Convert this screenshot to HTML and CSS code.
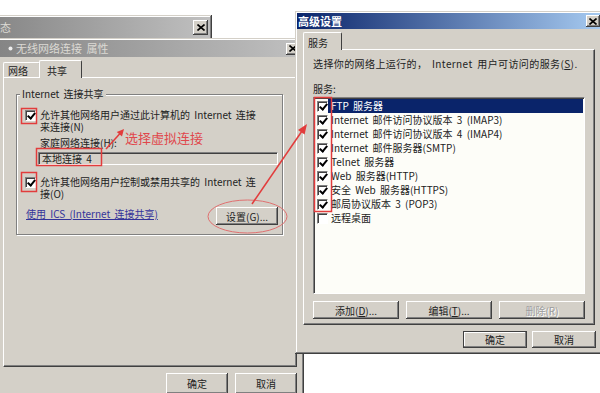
FILE: index.html
```html
<!DOCTYPE html>
<html lang="zh-CN">
<head>
  <meta charset="utf-8">
  <title>高级设置</title>
  <link rel="stylesheet" href="styles.css">
</head>
<body>
  <div class="desktop">

    <!-- window at the back, only its title bar is left in view -->
    <div class="win win-status">
      <div class="titlebar inactive status-bar">
        <span class="title-text">状态</span>
        <span class="close-btn big">
          <svg width="8" height="7" viewBox="0 0 8 7"><path d="M0.5 0.5 L7.5 6.5 M7.5 0.5 L0.5 6.5" stroke="#000" stroke-width="1.6"/></svg>
        </span>
      </div>
    </div>

    <!-- connection properties -->
    <div class="win win-props">
      <div class="titlebar inactive">
        <svg class="title-icon" width="5" height="5" viewBox="0 0 5 5"><circle cx="2.5" cy="2.5" r="2" fill="#eeeeee"/></svg>
        <span class="title-text">无线网络连接 属性</span>
        <span class="close-btn">
          <svg width="8" height="7" viewBox="0 0 8 7"><path d="M0.5 0.5 L7.5 6.5 M7.5 0.5 L0.5 6.5" stroke="#000" stroke-width="1.6"/></svg>
        </span>
      </div>

      <div class="tabs props-tabs">
        <div class="tab tab-net">网络</div>
        <div class="tab active tab-share">共享</div>
      </div>

      <div class="page props-page">
        <fieldset class="group">
          <legend>Internet 连接共享</legend>
          <div class="check-row">
            <span class="checkbox checked"></span>
            <span class="check-label">允许其他网络用户通过此计算机的 Internet 连接<br>来连接(N)</span>
          </div>
          <div class="field-label">家庭网络连接(H):</div>
          <div class="textbox">本地连接 4</div>
          <div class="check-row second">
            <span class="checkbox checked"></span>
            <span class="check-label">允许其他网络用户控制或禁用共享的 Internet 连<br>接(O)</span>
          </div>
          <div class="group-foot">
            <a class="link">使用 ICS (Internet 连接共享)</a>
            <button class="btn btn-settings">设置(G)...</button>
          </div>
        </fieldset>
      </div>

      <div class="dialog-buttons props-buttons">
        <button class="btn">确定</button>
        <button class="btn">取消</button>
      </div>
    </div>

    <!-- advanced settings, the active dialog -->
    <div class="win win-adv">
      <div class="titlebar active-bar">
        <span class="title-text">高级设置</span>
        <span class="close-btn">
          <svg width="8" height="7" viewBox="0 0 8 7"><path d="M0.5 0.5 L7.5 6.5 M7.5 0.5 L0.5 6.5" stroke="#000" stroke-width="1.6"/></svg>
        </span>
      </div>

      <div class="tabs adv-tabs">
        <div class="tab active tab-service">服务</div>
      </div>

      <div class="page adv-page">
        <p class="intro">选择你的网络上运行的， Internet 用户可访问的服务(<u>S</u>).</p>
        <p class="list-title">服务:</p>
        <div class="listbox">
          <div class="list-row selected"><span class="checkbox checked"></span><span class="row-text">FTP 服务器</span></div>
          <div class="list-row"><span class="checkbox checked"></span><span class="row-text">Internet 邮件访问协议版本 3 (IMAP3)</span></div>
          <div class="list-row"><span class="checkbox checked"></span><span class="row-text">Internet 邮件访问协议版本 4 (IMAP4)</span></div>
          <div class="list-row"><span class="checkbox checked"></span><span class="row-text">Internet 邮件服务器(SMTP)</span></div>
          <div class="list-row"><span class="checkbox checked"></span><span class="row-text">Telnet 服务器</span></div>
          <div class="list-row"><span class="checkbox checked"></span><span class="row-text">Web 服务器(HTTP)</span></div>
          <div class="list-row"><span class="checkbox checked"></span><span class="row-text">安全 Web 服务器(HTTPS)</span></div>
          <div class="list-row"><span class="checkbox checked"></span><span class="row-text">邮局协议版本 3 (POP3)</span></div>
          <div class="list-row"><span class="checkbox"></span><span class="row-text">远程桌面</span></div>
        </div>
        <div class="list-buttons">
          <button class="btn">添加(<u>D</u>)...</button>
          <button class="btn">编辑(<u>T</u>)...</button>
          <button class="btn disabled">删除(R)</button>
        </div>
      </div>

      <div class="dialog-buttons adv-buttons">
        <button class="btn default">确定</button>
        <button class="btn">取消</button>
      </div>
    </div>

    <!-- red marks drawn over the screenshot -->
    <svg class="marks" width="600" height="393" viewBox="0 0 600 393">
      <g fill="none" stroke="#e23c3c" stroke-width="1.5">
        <rect x="21.5" y="108.5" width="15" height="15"/>
        <rect x="36.5" y="148.5" width="65" height="17"/>
        <rect x="21.5" y="172.5" width="15" height="19"/>
        <rect x="314.5" y="97.5" width="17" height="114"/>
        <ellipse cx="247.5" cy="216.5" rx="39.5" ry="16.5" stroke="#e07070" stroke-width="1"/>
        <path d="M106 149 L120 133.5"/>
        <path d="M252 204 L302 131"/>
      </g>
      <g fill="#e23c3c">
        <polygon points="124,129 122,136.6 116.8,131.9"/>
        <polygon points="307,124 304.6,134.5 298,129.9"/>
      </g>
    </svg>
    <span class="mark-note">选择虚拟连接</span>

  </div>
</body>
</html>
```

FILE: styles.css
```css
/* reset */
* {
  margin: 0;
  padding: 0;
  box-sizing: border-box;
}

body {
  background: #fff;
  font-family: "Noto Sans CJK SC", "Noto Sans", sans-serif;
  font-size: 10px;
  line-height: 11px;
  word-spacing: 2px;
  color: #222;
}

.desktop {
  position: relative;
  width: 600px;
  height: 393px;
  overflow: hidden;
}

/* classic windows */
.win {
  position: absolute;
  padding: 2px;
  background: #d4d0c8;
  box-shadow: inset -1px -1px #404040, inset 1px 1px #d4d0c8,
              inset -2px -2px #808080, inset 2px 2px #fff;
}

.win-status {
  left: -14px;
  top: 15px;
  width: 226px;
  height: 30px;
}

.win-props {
  left: -2px;
  top: 38px;
  width: 306px;
  height: 362px;
  z-index: 1;
}

.win-adv {
  left: 295px;
  top: 11px;
  width: 308px;
  height: 343px;
  z-index: 2;
}

.titlebar {
  display: flex;
  align-items: center;
  height: 17px;
  padding-left: 8px;
  font-size: 11px;
}

.titlebar.inactive {
  background: linear-gradient(to right, #858585, #c0c0c0);
  color: #dcdad4;
}

.titlebar.active-bar {
  height: 16px;
  padding-left: 1px;
  background: linear-gradient(to right, #0a246a, #a6caf0);
  color: #fff;
  font-weight: bold;
}

.status-bar {
  height: 21px;
  padding-left: 1px;
}

.title-icon {
  margin-right: 3px;
}

.title-text {
  flex: 1;
  white-space: nowrap;
}

.close-btn {
  display: flex;
  align-items: center;
  justify-content: center;
  width: 14px;
  height: 12px;
  margin-right: 2px;
  background: #d4d0c8;
  box-shadow: inset -1px -1px #404040, inset 1px 1px #fff, inset -2px -2px #808080;
}

.close-btn.big {
  width: 15px;
  height: 15px;
}

.win-adv .close-btn {
  margin-right: 1px;
}

/* tabs */
.tabs {
  display: flex;
  align-items: flex-end;
  height: 20px;
}

.props-tabs {
  padding-left: 3px;
}

.adv-tabs {
  padding-left: 6px;
}

.tab {
  height: 15px;
  padding-top: 2px;
  border: 1px solid #fff;
  border-bottom: 0;
  border-right-color: #404040;
  border-radius: 2px 2px 0 0;
  background: #d4d0c8;
  white-space: nowrap;
}

.tab.active {
  position: relative;
  z-index: 1;
  height: 18px;
  margin-bottom: -1px;
  padding-top: 4px;
}

.tab-net {
  width: 37px;
  padding-left: 4px;
}

.tab-share {
  width: 43px;
  margin-left: -1px;
  padding-left: 7px;
}

.tab-service {
  width: 39px;
  height: 17px;
  padding-top: 3px;
  padding-left: 4px;
}

.page {
  border: 1px solid;
  border-color: #fff #404040 #404040 #fff;
  box-shadow: inset -1px -1px #808080;
}

/* sharing page */
.props-page {
  width: 294px;
  height: 290px;
  margin-left: 3px;
  padding: 10px 13px 0 12px;
}

.group {
  width: 267px;
  padding: 0 4px 9px 8px;
  border: 1px solid #808080;
  box-shadow: 1px 1px 0 #fff, inset 1px 1px 0 #fff;
}

.group legend {
  margin-left: -5px;
  padding: 0 2px;
  line-height: 12px;
  background: #d4d0c8;
}

.check-row {
  display: flex;
  gap: 4px;
  margin-top: 9px;
}

.check-row .checkbox {
  margin-top: 1px;
}

.check-row.second {
  margin-top: 11px;
}

.check-label {
  line-height: 12px;
  white-space: nowrap;
}

.field-label {
  margin-top: 4px;
  padding-left: 15px;
}

.textbox {
  height: 13px;
  margin-top: 4px;
  margin-left: 13px;
  padding-left: 3px;
  line-height: 11px;
  border: 1px solid;
  border-color: #808080 #fff #fff #808080;
  box-shadow: inset 1px 1px #404040;
}

.group-foot {
  display: flex;
  justify-content: space-between;
  align-items: flex-start;
  margin-top: 7px;
}

.link {
  margin-top: 1px;
  margin-left: 1px;
  color: #33339a;
  text-decoration: underline;
}

/* checkboxes */
.checkbox {
  position: relative;
  flex: none;
  width: 11px;
  height: 11px;
  background: #fff;
  border: 1px solid;
  border-color: #808080 #fff #fff #808080;
  box-shadow: inset 1px 1px #404040;
}

.checkbox.checked::after {
  content: "";
  position: absolute;
  left: 3px;
  top: 0;
  width: 3px;
  height: 6px;
  border: solid #000;
  border-width: 0 2px 2px 0;
  transform: rotate(40deg);
}

/* buttons */
.btn {
  height: 18px;
  border: 0;
  background: #d4d0c8;
  font: inherit;
  color: #222;
  box-shadow: inset -1px -1px #404040, inset 1px 1px #fff, inset -2px -2px #808080;
}

.btn-settings {
  width: 62px;
}

.btn.disabled {
  color: #9c9c9c;
  text-shadow: 1px 1px #fff;
}

.btn.default {
  box-shadow: inset 0 0 0 1px #404040, inset -2px -2px #808080, inset 2px 2px #fff;
}

.dialog-buttons {
  display: flex;
  justify-content: flex-end;
  margin-top: 6px;
  padding-right: 5px;
}

.props-buttons {
  gap: 7px;
}

.props-buttons .btn {
  width: 62px;
  height: 21px;
}

.adv-buttons {
  gap: 5px;
}

.adv-buttons .btn {
  width: 64px;
  height: 17px;
}

/* services page */
.adv-page {
  width: 292px;
  height: 276px;
  margin-left: 6px;
  padding: 8px 9px 0;
}

.intro {
  letter-spacing: 0.4px;
  white-space: nowrap;
}

.list-title {
  margin-top: 14px;
}

.listbox {
  width: 272px;
  height: 197px;
  margin-top: 3px;
  background: #fdfdf8;
  border: 1px solid;
  border-color: #808080 #fff #fff #808080;
  box-shadow: inset 1px 1px #404040;
  padding-top: 1px;
}

.list-row {
  display: flex;
  align-items: center;
  height: 14px;
  padding-left: 3px;
}

.row-text {
  flex: 1;
  height: 14px;
  margin-right: 1px;
  padding-left: 3px;
  line-height: 14px;
  white-space: nowrap;
}

.list-row.selected .row-text {
  background: #0a246a;
  color: #fff;
}

.list-buttons {
  display: flex;
  gap: 7px;
  margin-top: 7px;
}

.list-buttons .btn {
  width: 86px;
}

/* annotations */
.marks {
  position: absolute;
  left: 0;
  top: 0;
  z-index: 5;
  pointer-events: none;
}

.mark-note {
  position: absolute;
  left: 125px;
  top: 130px;
  z-index: 5;
  font-size: 13px;
  line-height: 16px;
  word-spacing: 0;
  color: #e0474c;
}
```
